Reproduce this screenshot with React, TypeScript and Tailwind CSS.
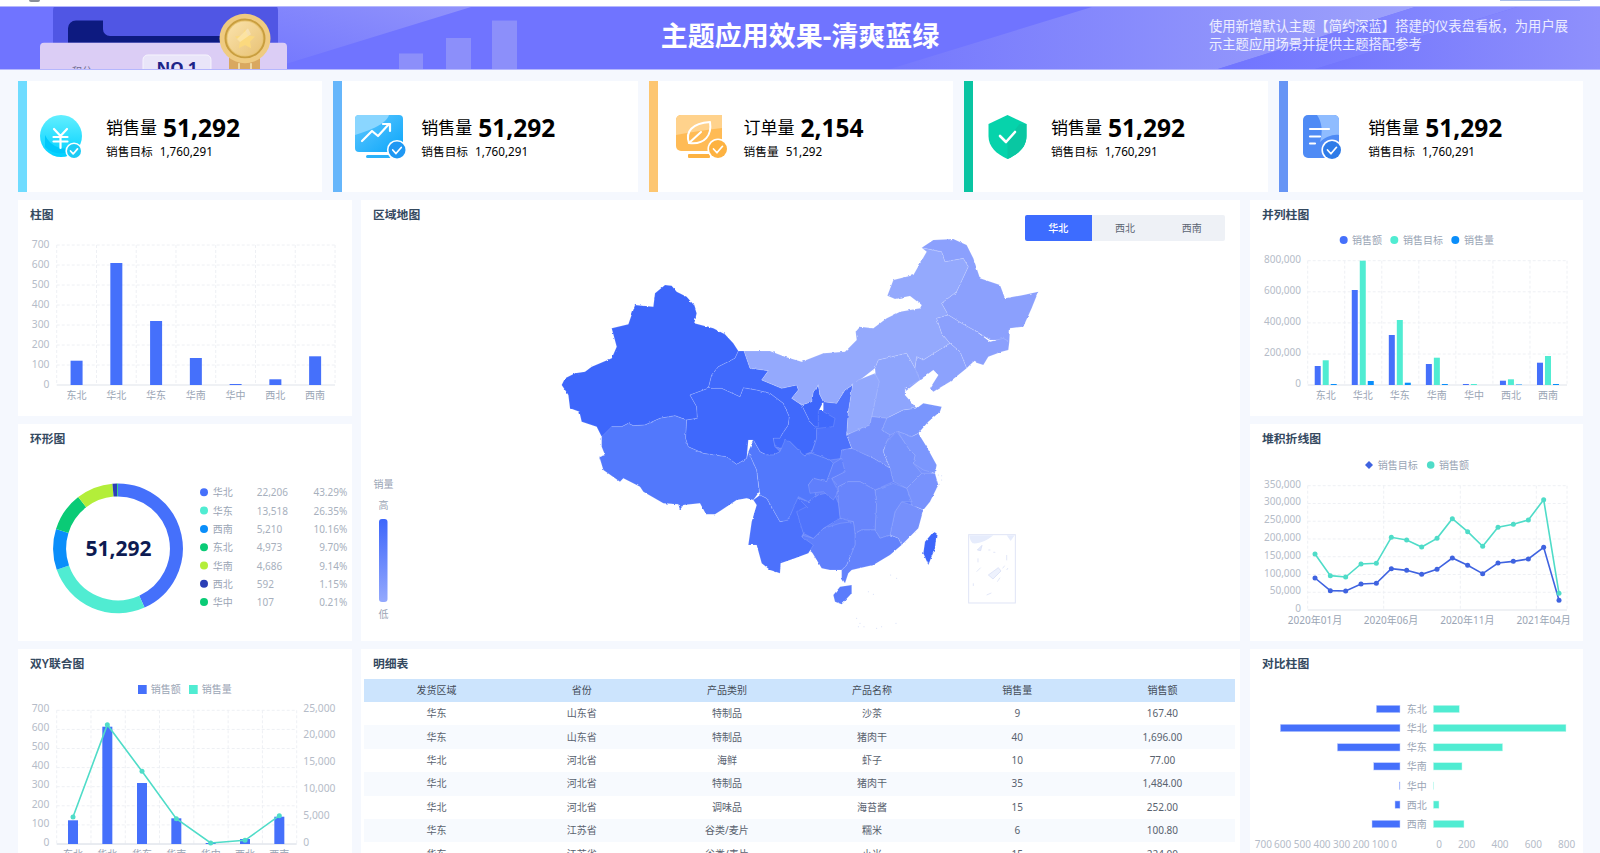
import React from "react";

const CATS = ["东北", "华北", "华东", "华南", "华中", "西北", "西南"];
const BLUE = "#4570fb";
const TEAL = "#50ecd2";
const AZURE = "#0a8efa";
const GRID = "#eef0f4";

type TP = { x: number; y: number; a?: "start" | "middle" | "end"; c?: string; s?: number; w?: number; children: React.ReactNode };
function T({ x, y, a = "middle", c = "#9aa5b5", s = 10, w, children }: TP) {
  return (
    <text x={x} y={y} textAnchor={a} dominantBaseline="central" fontSize={s} fontWeight={w} fill={c}>
      {children}
    </text>
  );
}

function HL({ x1, x2, y, solid }: { x1: number; x2: number; y: number; solid?: boolean }) {
  return <line x1={x1} x2={x2} y1={y} y2={y} stroke={solid ? "#dfe3ea" : GRID} strokeDasharray={solid ? undefined : "3 2"} />;
}
function VL({ x, y1, y2 }: { x: number; y1: number; y2: number }) {
  return <line x1={x} x2={x} y1={y1} y2={y2} stroke={GRID} strokeDasharray="3 2" />;
}

function Panel({ title, titleH = 28, className = "", children }: { title: string; titleH?: number; className?: string; children: React.ReactNode }) {
  return (
    <section className={`relative flex flex-col overflow-hidden bg-white ${className}`}>
      <h2 className="shrink-0 pl-3 pt-[6px] text-[11.8px] leading-4 font-semibold text-[#34495f]" style={{ height: titleH }}>
        {title}
      </h2>
      {children}
    </section>
  );
}

function BarPanel() {
  const vals = [24.3, 122, 64, 27, 1, 5.7, 28.7];
  const x0 = 56.7;
  const cw = (335 - x0) / 7;
  return (
    <svg className="block h-[188px] w-[334px] shrink-0" viewBox="18 228 334 188">
      {[0, 1, 2, 3, 4, 5, 6].map((i) => (
        <HL key={i} x1={x0} x2={335} y={245 + i * 20} />
      ))}
      {[0, 1, 2, 3, 4, 5, 6, 7].map((i) => (
        <VL key={i} x={x0 + i * cw} y1={245} y2={385} />
      ))}
      <HL x1={x0} x2={335} y={385} solid />
      {["700", "600", "500", "400", "300", "200", "100", "0"].map((l, i) => (
        <T key={l} x={49.5} y={243.7 + i * 20} a="end" c="#b5bcc8" s={10.3}>
          {l}
        </T>
      ))}
      {vals.map((v, i) => (
        <rect key={i} x={x0 + cw * i + cw / 2 - 6} y={385 - v} width={12} height={v} fill={BLUE} />
      ))}
      {CATS.map((c, i) => (
        <T key={c} x={x0 + cw * i + cw / 2} y={395}>
          {c}
        </T>
      ))}
    </svg>
  );
}

const DONUT: [string, string, string, number, string][] = [
  ["华北", "22,206", "43.29%", 43.29, BLUE],
  ["华东", "13,518", "26.35%", 26.35, "#50ecd2"],
  ["西南", "5,210", "10.16%", 10.16, AZURE],
  ["东北", "4,973", "9.70%", 9.7, "#0acb76"],
  ["华南", "4,686", "9.14%", 9.14, "#b3ee3a"],
  ["西北", "592", "1.15%", 1.15, "#2b3fb5"],
  ["华中", "107", "0.21%", 0.21, "#0acb76"],
];

function DonutPanel() {
  const cx = 118;
  const cy = 548.3;
  const r = 58.4;
  let acc = 0;
  const arcs = DONUT.map((d) => {
    const a0 = (acc / 100) * Math.PI * 2 - Math.PI / 2;
    acc += d[3];
    const a1 = (acc / 100) * Math.PI * 2 - Math.PI / 2;
    const big = d[3] > 50 ? 1 : 0;
    return {
      c: d[4],
      p: `M${cx + r * Math.cos(a0)} ${cy + r * Math.sin(a0)}A${r} ${r} 0 ${big} 1 ${cx + r * Math.cos(a1)} ${cy + r * Math.sin(a1)}`,
    };
  });
  return (
    <svg className="block h-[189px] w-[334px] shrink-0" viewBox="18 452 334 189">
      {arcs.map((a, i) => (
        <path key={i} d={a.p} fill="none" stroke={a.c} strokeWidth={13} />
      ))}
      <T x={118.5} y={548} c="#0d1b52" s={21} w={700}>
        51,292
      </T>
      {DONUT.map((d, i) => {
        const y = 492.3 + i * 18.3;
        return (
          <g key={d[0]}>
            <circle cx={204} cy={y} r={4} fill={d[4]} />
            <T x={212.7} y={y} a="start">
              {d[0]}
            </T>
            <T x={256.7} y={y} a="start" c="#a7b0bd">
              {d[1]}
            </T>
            <T x={347.3} y={y} a="end" c="#a7b0bd">
              {d[2]}
            </T>
          </g>
        );
      })}
    </svg>
  );
}

function GroupedPanel() {
  const x0 = 1307.7;
  const x1 = 1567;
  const cw = (x1 - x0) / 7;
  const vals = [
    [19, 24.7, 1],
    [95, 124.3, 4],
    [50, 65, 2.3],
    [21, 27.3, 1],
    [1, 1, 0],
    [4.3, 5.7, 0.5],
    [22.3, 29, 1],
  ];
  return (
    <svg className="block h-[188px] w-[333px] shrink-0" viewBox="1250 228 333 188">
      <circle cx={1343.7} cy={240} r={4} fill={BLUE} />
      <T x={1352} y={240} a="start">销售额</T>
      <circle cx={1394.3} cy={240} r={4} fill={TEAL} />
      <T x={1403} y={240} a="start">销售目标</T>
      <circle cx={1455.3} cy={240} r={4} fill={AZURE} />
      <T x={1464} y={240} a="start">销售量</T>
      {[0, 1, 2, 3].map((i) => (
        <HL key={i} x1={x0} x2={x1} y={260.7 + i * 31.1} />
      ))}
      {[0, 1, 2, 3, 4, 5, 6, 7].map((i) => (
        <VL key={i} x={x0 + i * cw} y1={260.7} y2={385} />
      ))}
      <HL x1={x0} x2={x1} y={385} solid />
      {["800,000", "600,000", "400,000", "200,000", "0"].map((l, i) => (
        <T key={l} x={1301} y={258.5 + i * 31.1} a="end" c="#b5bcc8" s={10}>
          {l}
        </T>
      ))}
      {vals.map((g, i) => {
        const cx = x0 + cw * i + cw / 2 - 0.5;
        return (
          <g key={i}>
            <rect x={cx - 11} y={385 - g[0]} width={6} height={g[0]} fill={BLUE} />
            <rect x={cx - 3} y={385 - g[1]} width={6} height={g[1]} fill={TEAL} />
            <rect x={cx + 5} y={385 - g[2]} width={6} height={g[2]} fill={AZURE} />
          </g>
        );
      })}
      {CATS.map((c, i) => (
        <T key={c} x={x0 + cw * i + cw / 2 - 0.5} y={395}>
          {c}
        </T>
      ))}
    </svg>
  );
}

const L_T = [1149, 1187, 1188, 1167, 1165, 1121, 1126, 1138, 1123, 1089, 1111, 1136, 1104, 1099, 1092, 1057, 1216];
const L_S = [1077, 1142, 1146, 1107, 1105, 1027, 1035, 1056, 1030, 971, 1010, 1054, 997, 988, 975, 914, 1195];
const L_X = [225, 271, 317, 363, 409, 454, 500, 545, 591, 637, 683, 728, 774, 820, 865, 911, 957];

function LinePanel() {
  const x0 = 1307.7;
  const x1 = 1567;
  const px = (z: number) => 1240 + z / 3;
  const py = (z: number) => 195 + z / 3;
  const line = (ys: number[], color: string) => (
    <g>
      <polyline points={ys.map((y, i) => `${px(L_X[i])},${py(y)}`).join(" ")} fill="none" stroke={color} strokeWidth={1.6} />
      {ys.map((y, i) => (
        <circle key={i} cx={px(L_X[i])} cy={py(y)} r={2.5} fill={color} />
      ))}
    </g>
  );
  return (
    <svg className="block h-[189px] w-[333px] shrink-0" viewBox="1250 452 333 189">
      <path d="M1369 461l4 4-4 4-4-4z" fill="#3f63e0" />
      <T x={1377.7} y={465} a="start">销售目标</T>
      <circle cx={1430.7} cy={465} r={3.8} fill="#4fdcc8" />
      <T x={1439} y={465} a="start">销售额</T>
      {[0, 1, 2, 3, 4, 5, 6].map((i) => (
        <HL key={i} x1={x0} x2={x1} y={485.7 + i * 17.76} />
      ))}
      {[x0, 1383.7, 1460.3, 1536.3, x1].map((x) => (
        <VL key={x} x={x} y1={485.7} y2={610} />
      ))}
      <HL x1={x0} x2={x1} y={610} solid />
      {["350,000", "300,000", "250,000", "200,000", "150,000", "100,000", "50,000", "0"].map((l, i) => (
        <T key={l} x={1301} y={483.5 + i * 17.8} a="end" c="#b5bcc8" s={10}>
          {l}
        </T>
      ))}
      {line(L_T, "#3f63e0")}
      {line(L_S, "#4fdcc8")}
      {["2020年01月", "2020年06月", "2020年11月", "2021年04月"].map((l, i) => (
        <T key={l} x={px([225, 453, 682, 911][i])} y={620}>
          {l}
        </T>
      ))}
    </svg>
  );
}

function ComboPanel() {
  const x0 = 56.7;
  const x1 = 296.7;
  const cw = (x1 - x0) / 7;
  const h = [23.7, 117.3, 61, 25.7, 1, 5, 27.3];
  const pts = [531, 254, 394, 536, 609, 601, 527];
  const cxs = [219, 322, 426, 529, 632, 735, 838].map((z) => z / 3);
  const py = (z: number) => 640 + z / 3;
  return (
    <svg className="block h-[176px] w-[334px] shrink-0" viewBox="18 677 334 176">
      <rect x={138} y={685} width={8.7} height={9} fill={BLUE} />
      <T x={150.7} y={689.3} a="start">销售额</T>
      <rect x={189} y={685} width={8.7} height={9} fill={TEAL} />
      <T x={201.7} y={689.3} a="start">销售量</T>
      {[0, 1, 2, 3, 4, 5, 6].map((i) => (
        <HL key={i} x1={x0} x2={x1} y={710.3 + i * 19.1} />
      ))}
      {[0, 1, 2, 3, 4, 5, 6, 7].map((i) => (
        <VL key={i} x={x0 + i * cw} y1={710.3} y2={844} />
      ))}
      <line x1={x0} x2={x1} y1={844} y2={844} stroke="#d2d8e2" />
      {["700", "600", "500", "400", "300", "200", "100", "0"].map((l, i) => (
        <T key={l} x={49.3} y={707.8 + i * 19.15} a="end" c="#b5bcc8" s={10.3}>
          {l}
        </T>
      ))}
      {["25,000", "20,000", "15,000", "10,000", "5,000", "0"].map((l, i) => (
        <T key={l} x={303.3} y={707.5 + i * 26.9} a="start" c="#b5bcc8" s={10.3}>
          {l}
        </T>
      ))}
      {h.map((v, i) => (
        <rect key={i} x={cxs[i] - 5} y={844 - v} width={10} height={v} fill={BLUE} />
      ))}
      <polyline points={pts.map((p, i) => `${cxs[i]},${py(p)}`).join(" ")} fill="none" stroke="#4fdcc8" strokeWidth={1.6} />
      {pts.map((p, i) => (
        <circle key={i} cx={cxs[i]} cy={py(p)} r={2.5} fill="#4fdcc8" />
      ))}
      {CATS.map((c, i) => (
        <T key={c} x={cxs[i]} y={854}>
          {c}
        </T>
      ))}
    </svg>
  );
}

function ButterflyPanel() {
  const ys = [207, 264, 322, 379, 437, 494, 552].map((z) => 640 + z / 3);
  const lefts = [409, 121, 292, 401, 478, 465, 396].map((z) => 1240 + z / 3);
  const rights = [658, 978, 788, 666, 581, 597, 672].map((z) => 1240 + z / 3);
  return (
    <svg className="block h-[176px] w-[333px] shrink-0" viewBox="1250 677 333 176">
      {ys.map((y, i) => (
        <g key={i}>
          <rect x={lefts[i]} y={y - 3.7} width={1400 - lefts[i]} height={7.4} fill={BLUE} stroke="#c7d4fe" strokeWidth={0.5} />
          <rect x={1433.3} y={y - 3.7} width={rights[i] - 1433.3} height={7.4} fill={TEAL} stroke="#d0faf2" strokeWidth={0.5} />
          <T x={1416.7} y={y}>
            {CATS[i]}
          </T>
        </g>
      ))}
      {[["700", 70], ["600", 128], ["500", 187], ["400", 246], ["300", 305], ["200", 363], ["100", 421], ["0", 462]].map(([l, z]) => (
        <T key={String(l)} x={1240 + Number(z) / 3} y={844.3} c="#b5bcc8" s={10}>
          {l}
        </T>
      ))}
      {[["0", 597], ["200", 680], ["400", 780], ["600", 880], ["800", 980]].map(([l, z]) => (
        <T key={String(l)} x={1240 + Number(z) / 3} y={844.3} c="#b5bcc8" s={10}>
          {l}
        </T>
      ))}
    </svg>
  );
}

const FILL: [string, string][] = [
  ["#6382fc", "700,640 830,600 900,660 1000,700 1100,760 1130,850 1000,980 850,1010 740,920 680,760"],
  ["#4069fc", "825,555 890,555 890,615 825,615"],
  ["#7892fd", "1085,640 1150,700 1178,745 1140,810 1090,790 1060,700"],
  ["#8ea5fd", "955,470 1020,440 1050,590 990,620 930,630"],
  ["#7690fc", "1020,590 1090,570 1120,640 1040,670 990,640"],
];

const REGIONS: [string, string][] = [
  ["#3d66fb", "375,180 395,182 410,200 440,215 462,240 470,265 463,295 520,310 555,328 580,355 595,378 585,400 535,425 515,450 505,490 450,510 470,545 472,580 440,585 405,572 360,580 315,600 280,602 265,595 245,605 215,605 208,635 185,635 170,605 125,590 118,560 90,550 85,510 65,480 75,460 105,445 135,440 155,425 215,400 230,365 215,310 265,298 285,240 340,245 345,205"],
  ["#5278fc", "185,635 215,605 245,605 265,595 280,602 315,600 360,580 405,572 440,585 437,640 445,665 490,685 560,695 590,718 620,700 625,680 650,735 658,800 640,825 620,820 590,825 545,855 525,868 498,868 480,835 430,840 420,855 415,838 370,835 310,800 300,785 250,760 240,770 190,735 178,695 195,690 185,665"],
  ["#3f68fc", "450,510 505,490 545,490 600,515 610,488 650,495 690,505 730,535 748,575 745,600 725,630 720,640 700,640 705,665 720,680 700,690 680,690 660,680 640,645 625,645 620,700 590,718 560,695 490,685 445,665 437,640 440,585 472,580 470,545"],
  ["#4069fc", "595,378 612,378 630,430 685,437 665,465 725,490 770,480 775,495 755,520 785,540 810,590 830,610 830,640 815,680 790,690 750,650 725,670 705,665 700,640 720,640 725,630 745,600 748,575 730,535 690,505 650,495 610,488 600,515 545,490 505,490 515,450 535,425 585,400"],
  ["#3d66fb", "785,540 815,530 820,500 835,482 840,510 850,530 835,560 835,605 825,605 810,590"],
  ["#4c71fc", "850,530 890,535 915,495 938,480 925,560 920,630 935,670 905,675 905,700 870,705 815,685 830,640 830,610 880,605 885,580 850,560"],
  ["#94a9fd", "612,378 690,378 735,395 785,410 850,385 915,380 950,345 947,320 960,305 1000,310 1040,280 1080,260 1140,250 1145,240 1110,213 1065,222 1042,212 1060,165 1120,150 1160,80 1145,68 1180,75 1205,80 1215,110 1270,100 1285,125 1250,200 1205,235 1225,270 1190,280 1205,325 1230,355 1150,405 1130,395 1125,430 1100,385 1015,405 1005,430 960,465 938,480 915,495 890,535 850,530 840,510 835,482 820,500 815,530 785,540 755,520 775,495 770,480 725,490 665,465 685,437 630,430"],
  ["#8ba0fd", "1145,68 1180,45 1240,42 1280,60 1300,100 1320,160 1380,180 1395,220 1450,210 1495,200 1475,250 1450,305 1410,310 1408,350 1390,345 1350,345 1310,320 1265,295 1225,270 1205,235 1250,200 1285,125 1270,100 1215,110 1205,80 1180,75"],
  ["#8ba0fd", "1190,280 1225,270 1265,295 1310,320 1350,350 1390,340 1408,350 1405,375 1385,380 1345,395 1330,420 1300,410 1280,430 1260,380 1230,355 1205,325"],
  ["#8ca2fd", "1125,430 1130,395 1150,405 1230,355 1260,380 1280,430 1230,470 1180,500 1170,490 1195,450 1180,435 1140,465 1095,500"],
  ["#8ea5fd", "1015,405 1100,385 1125,430 1140,465 1095,490 1095,510 1130,550 1090,555 1040,580 995,575 1010,500 1005,430"],
  ["#92a8fd", "955,465 1005,445 1018,470 995,575 990,600 920,630 925,560 938,480"],
  ["#7a96fd", "1040,580 1090,555 1130,550 1150,535 1205,545 1200,560 1165,590 1135,625 1115,635 1075,620 1050,630 1025,615"],
  ["#7690fc", "920,630 990,600 995,575 1040,580 1025,615 1050,630 1040,650 1030,680 1050,730 1000,700 940,675 935,670"],
  ["#7b96fd", "1075,620 1115,635 1135,625 1160,665 1190,720 1185,745 1150,735 1120,715 1125,690 1105,670 1085,640"],
  ["#7591fc", "1040,650 1070,620 1085,640 1105,670 1125,690 1120,715 1145,745 1100,790 1060,770 1050,730 1030,680"],
  ["#7892fd", "1145,745 1185,745 1195,780 1170,830 1150,855 1115,840 1100,790"],
  ["#7690fc", "1085,830 1115,840 1150,855 1135,910 1085,960 1075,940 1050,930 1065,860"],
  ["#6d8bfc", "1005,795 1060,775 1100,790 1115,830 1085,830 1065,860 1050,930 1020,940 1005,915 1010,830"],
  ["#6885fc", "905,675 935,670 1000,700 1050,730 1060,770 1005,795 960,770 925,770 895,785 875,760 915,740 900,705"],
  ["#6885fc", "895,785 925,770 960,770 1005,795 1010,830 1005,915 965,915 945,925 940,890 900,880 895,835"],
  ["#6382fc", "965,915 1005,915 1020,940 1050,930 1075,940 1085,960 1050,990 1000,1020 935,1035 925,1045 915,1075 905,1060 905,1035 920,1020 945,960 945,925"],
  ["#5f7ffc", "785,930 820,940 850,910 900,895 940,890 945,925 945,960 920,1020 905,1035 870,1035 845,1030 815,980 790,950"],
  ["#5074fc", "805,830 835,810 880,800 895,835 900,880 850,910 820,940 790,925 765,870 775,820"],
  ["#4c71fc", "640,825 660,810 680,820 720,890 745,885 770,815 780,825 800,845 770,860 790,925 785,935 820,960 805,985 765,1000 722,1015 720,1045 690,1035 665,1015 650,960 625,960 635,890 650,840"],
  ["#5278fc", "625,680 640,645 660,680 680,690 700,690 720,680 735,645 750,650 790,690 815,685 870,705 880,715 860,770 820,760 805,780 830,810 805,830 775,815 745,885 720,890 680,820 660,810 650,735"],
  ["#5f7ffc", "880,715 905,700 915,740 875,760 895,800 880,825 850,800 810,805 805,780 820,760 860,770"],
  ["#5a7cfc", "880,1110 900,1085 935,1080 935,1105 905,1138 885,1130"],
  ["#3d66fb", "1180,920 1190,925 1185,970 1165,1020 1150,985 1155,950"],
];

const ISLES = [
  [950, 1180], [960, 1195], [972, 1205], [955, 1205], [1010, 1210], [1025, 1205], [1068, 1195], [1052, 1050], [1070, 1060], [985, 1100], [1000, 1108],
  [1195, 750], [1205, 765], [1198, 778], [1190, 790], [1205, 752],
];

function MapPanel() {
  return (
    <svg className="block h-[413px] w-[877px] shrink-0" viewBox="361 228 877 413">
      <defs>
        <linearGradient id="mapscale" x1="0" y1="0" x2="0" y2="1">
          <stop offset="0" stopColor="#3d66fb" />
          <stop offset="1" stopColor="#94a9fd" />
        </linearGradient>
        <filter id="rough" x="-5%" y="-5%" width="110%" height="110%" colorInterpolationFilters="sRGB">
          <feTurbulence type="fractalNoise" baseFrequency="0.07" numOctaves="2" seed="4" />
          <feDisplacementMap in="SourceGraphic" scale="7" xChannelSelector="R" yChannelSelector="G" />
        </filter>
      </defs>
      <T x={383.6} y={484}>销量</T>
      <T x={383.4} y={505}>高</T>
      <rect x={379} y={519} width={8.5} height={83} rx={3} fill="url(#mapscale)" />
      <T x={383.4} y={614}>低</T>
      <g transform="translate(540 225) scale(0.33333)">
        <g filter="url(#rough)">
          {FILL.map(([f, p], i) => (
            <polygon key={i} points={p} fill={f} />
          ))}
          {REGIONS.map(([f, p], i) => (
            <polygon key={i} points={p} fill={f} stroke="#ffffff" strokeOpacity={0.28} strokeWidth={1.5} strokeLinejoin="round" />
          ))}
        </g>
        {ISLES.map(([x, y], i) => (
          <circle key={i} cx={x} cy={y} r={1.6} fill="#cfd8f6" />
        ))}
        <rect x={1286} y={929} width={140} height={205} fill="#ffffff" stroke="#dfe4f6" strokeWidth={3} />
        <path d="M1288 931H1360C1345 945 1315 958 1298 955 1292 950 1289 942 1288 931Z" fill="#e6ecfc" />
        <path d="M1400 931H1424L1412 948Z" fill="#e6ecfc" />
        <path d="M1312 975l14-14-4 16zM1400 990v16M1314 1000v12M1310 1040l12-12M1372 1070l8-12M1340 1110l14-6M1300 1075v8" stroke="#d3dbf5" strokeWidth={2} fill="#e6ecfc" />
        <path d="M1345 1050l30-22 8 10-24 24zM1388 1030l6-8M1400 1035l4-6M1345 975h6M1360 982h6" stroke="#d3dbf5" strokeWidth={2} fill="#eef2fd" />
      </g>
    </svg>
  );
}

const ROWS = [
  ["华东", "山东省", "特制品", "沙茶", "9", "167.40"],
  ["华东", "山东省", "特制品", "猪肉干", "40", "1,696.00"],
  ["华北", "河北省", "海鲜", "虾子", "10", "77.00"],
  ["华北", "河北省", "特制品", "猪肉干", "35", "1,484.00"],
  ["华北", "河北省", "调味品", "海苔酱", "15", "252.00"],
  ["华东", "江苏省", "谷类/麦片", "糯米", "6", "100.80"],
  ["华东", "江苏省", "谷类/麦片", "小米", "15", "224.00"],
];

function DetailTable() {
  return (
    <div className="shrink-0 pr-[5px] pl-[3px]">
      <div className="grid h-[23px] grid-cols-6 items-center bg-[#cce4fd] text-center text-[10px] text-[#444c58]">
        {["发货区域", "省份", "产品类别", "产品名称", "销售量", "销售额"].map((h) => (
          <span key={h}>{h}</span>
        ))}
      </div>
      {ROWS.map((r, i) => (
        <div key={i} className={`grid h-[23.4px] grid-cols-6 items-center text-center text-[10px] text-[#59626f] ${i % 2 === 1 ? "bg-[#f7fafe]" : "bg-white"}`}>
          {r.map((c, j) => (
            <span key={j}>{c}</span>
          ))}
        </div>
      ))}
    </div>
  );
}

function Badge({ cx, cy, r, c }: { cx: number; cy: number; r: number; c: string }) {
  return (
    <g>
      <circle cx={cx} cy={cy} r={r + 1.6} fill="#ffffff" />
      <circle cx={cx} cy={cy} r={r} fill={c} />
      <path d={`M${cx - r * 0.5} ${cy}l${r * 0.38} ${r * 0.42} ${r * 0.62} -${r * 0.72}`} fill="none" stroke="#fff" strokeWidth={1.7} strokeLinecap="round" strokeLinejoin="round" />
    </g>
  );
}

function IconYen() {
  return (
    <svg className="h-[44px] w-[46px] shrink-0" viewBox="38 115 46 44">
      <defs>
        <linearGradient id="y1" x1="0" y1="0" x2="0" y2="1">
          <stop offset="0" stopColor="#62efff" />
          <stop offset="1" stopColor="#00d0ff" />
        </linearGradient>
      </defs>
      <circle cx={60} cy={136} r={21} fill="url(#y1)" />
      <path d="M44 147a21 21 0 0 0 32 -2 22 22 0 0 1 -32 -10z" fill="#00c8fb" />
      <path d="M53 129l6.500 7 6.500 -7M52.500 137h14M52.500 141.500h14M59.500 136v12" fill="none" stroke="#fff" strokeWidth={2.2} strokeLinecap="round" strokeLinejoin="round" />
      <Badge cx={73} cy={151} r={7} c="#1ccbf5" />
    </svg>
  );
}

function IconChart() {
  return (
    <svg className="h-[44px] w-[53px] shrink-0" viewBox="355 115 53 44">
      <defs>
        <linearGradient id="c1" x1="0" y1="0" x2="1" y2="1">
          <stop offset="0" stopColor="#63c8ff" />
          <stop offset="1" stopColor="#0aa6fa" />
        </linearGradient>
      </defs>
      <rect x={355} y={115} width={48} height={37} rx={4} fill="url(#c1)" />
      <path d="M355 135V119a4 4 0 0 1 4 -4h30c-3 9 -18 15 -34 20z" fill="#8ad6ff" />
      <rect x={366} y={155} width={26} height={3} rx={1.500} fill="#2bb2fa" />
      <path d="M362 141l10-10 6 5 11-12M383 124h7v7" fill="none" stroke="#fff" strokeWidth={2.2} strokeLinecap="round" strokeLinejoin="round" />
      <Badge cx={397} cy={150} r={8.500} c="#1f98f3" />
    </svg>
  );
}

function IconLeaf() {
  return (
    <svg className="h-[44px] w-[54px] shrink-0" viewBox="675 115 54 44">
      <rect x={675} y={115} width={46} height={36} rx={5} fill="#ffbb55" />
      <path d="M675 135v-15a5 5 0 0 1 5 -5h41v13c-16 2 -32 4 -46 7z" fill="#ffd28c" />
      <rect x={687} y={154} width={22} height={4} rx={1} fill="#fdb241" />
      <path d="M688 143c-4 -11 3 -20 21 -21 2 13 -5 23 -21 21z" fill="none" stroke="#fff" strokeWidth={2} strokeLinejoin="round" />
      <path d="M688 143l12 -11" fill="none" stroke="#fff" strokeWidth={2} strokeLinecap="round" />
      <Badge cx={717} cy={149} r={9} c="#fdb241" />
    </svg>
  );
}

function IconShield() {
  return (
    <svg className="h-[44px] w-[40px] shrink-0" viewBox="987 115 40 44">
      <path d="M1006.500 115l19 9v12c0 11 -8 18 -19 23 -11 -5 -19 -12 -19 -23v-12z" fill="#06d3ab" />
      <path d="M1006.500 159v-20l12 -15 7 0v12c0 11 -8 18 -19 23z" fill="#09c7a2" />
      <path d="M999 136l6 6 9-10" fill="none" stroke="#fff" strokeWidth={2.6} strokeLinecap="round" strokeLinejoin="round" />
    </svg>
  );
}

function IconDoc() {
  return (
    <svg className="h-[44px] w-[42px] shrink-0" viewBox="1304 115 42 44">
      <rect x={1304} y={115} width={36} height={43} rx={5} fill="#4f8bf5" />
      <path d="M1318 115h17a5 5 0 0 1 5 5v15c-6 -1 -14 2 -19 7 3 -10 2 -20 -3 -27z" fill="#8fbcff" />
      <path d="M1311 129h19M1311 136.500h10M1311 143.500h5" stroke="#fff" strokeWidth={2.200} strokeLinecap="round" />
      <Badge cx={1333} cy={150} r={9} c="#2f7ce8" />
    </svg>
  );
}

type K = { bar: string; icon: React.ReactNode; pad: string; gap: string; a: string; b: string; c: string; d: string };
const KPIS: K[] = [
  { bar: "bg-[#6fdcff]", icon: <IconYen />, pad: "pl-[12px]", gap: "gap-[21px]", a: "销售量", b: "51,292", c: "销售目标", d: "1,760,291" },
  { bar: "bg-[#66b6fb]", icon: <IconChart />, pad: "pl-[13px]", gap: "gap-[13px]", a: "销售量", b: "51,292", c: "销售目标", d: "1,760,291" },
  { bar: "bg-[#fdc671]", icon: <IconLeaf />, pad: "pl-[18px]", gap: "gap-[14px]", a: "订单量", b: "2,154", c: "销售量", d: "51,292" },
  { bar: "bg-[#09c4a2]", icon: <IconShield />, pad: "pl-[15px]", gap: "gap-[23px]", a: "销售量", b: "51,292", c: "销售目标", d: "1,760,291" },
  { bar: "bg-[#6795f5]", icon: <IconDoc />, pad: "pl-[15px]", gap: "gap-[23px]", a: "销售量", b: "51,292", c: "销售目标", d: "1,760,291" },
];

function Kpi({ k }: { k: K }) {
  return (
    <div className={`flex items-center bg-white ${k.bar}`}>
      <div className={`h-full w-[9px] shrink-0 ${k.bar}`} />
      <div className={`flex h-full flex-1 items-center bg-white ${k.pad} ${k.gap}`}>
        {k.icon}
        <div className="text-black">
          <div className="flex items-center gap-[6px] leading-[30px]">
            <span className="text-[17px]">{k.a}</span>
            <span className="text-[24.500px] font-bold">{k.b}</span>
          </div>
          <div className="-mt-[1px] flex items-center gap-[7px] text-[11.7px] leading-[18px]">
            <span>{k.c}</span>
            <span>{k.d}</span>
          </div>
        </div>
      </div>
    </div>
  );
}

function HeaderArt() {
  return (
    <svg className="absolute inset-0 h-full w-full" viewBox="0 6 1600 64" preserveAspectRatio="none">
      <defs>
        <linearGradient id="h1" x1="0" y1="0" x2="1" y2="0">
          <stop offset="0" stopColor="#7578fd" />
          <stop offset="1" stopColor="#9ea2fb" />
        </linearGradient>
        <linearGradient id="h2" x1="0" y1="0" x2="1" y2="0">
          <stop offset="0" stopColor="#7074ff" />
          <stop offset="1" stopColor="#8a8dfd" />
        </linearGradient>
        <linearGradient id="h3" x1="0" y1="0" x2="1" y2="0">
          <stop offset="0" stopColor="#7275fd" />
          <stop offset="1" stopColor="#8f90fc" />
        </linearGradient>
        <linearGradient id="h4" x1="0" y1="1" x2="1" y2="0">
          <stop offset="0" stopColor="#7377fe" />
          <stop offset="1" stopColor="#9193fb" />
        </linearGradient>
        <linearGradient id="med" x1="0" y1="0" x2="1" y2="1">
          <stop offset="0" stopColor="#fbe3ab" />
          <stop offset="1" stopColor="#e8c276" />
        </linearGradient>
      </defs>
      <polygon points="270,6 471,6 288,64 270,70" fill="url(#h4)" />
      <polygon points="1092,6 1415,6 1218,70 890,70" fill="url(#h1)" />
      <polygon points="1415,6 1517,6 1315,70 1218,70" fill="url(#h2)" />
      <polygon points="1517,6 1600,6 1600,70 1315,70" fill="url(#h3)" />
      <rect x={399} y={54} width={24} height={16} fill="#8c8ffa" />
      <rect x={446} y={38} width={25} height={32} fill="#8c8ffa" />
      <rect x={492} y={20} width={25} height={50} fill="#8c8ffa" />
      <rect x={53} y={0} width={225} height={80} rx={10} fill="#5056e4" />
      <path d="M68 43V28a8 8 0 0 1 8 -8h27v9a7 7 0 0 0 7 7h120v7z" fill="#0d1a80" />
      <rect x={40} y={43} width={247} height={40} rx={4} fill="#dbcdf5" />
      <rect x={143} y={55.500} width={68} height={30} rx={5} fill="#e9e5f9" stroke="#f6f4fd" />
      <text x={177} y={75} textAnchor="middle" fontSize={17} fontWeight={700} fill="#1d2488">NO.1</text>
      <text x={72} y={76} fontSize={10} fill="#6d6a8e">积分</text>
      <rect x={229} y={58} width={31} height={14} fill="#d9a860" />
      <rect x={238} y={64} width={2} height={8} fill="#f0d9a4" />
      <rect x={250} y={64} width={2} height={8} fill="#f0d9a4" />
      <circle cx={245} cy={38.500} r={25.500} fill="#efcb81" />
      <circle cx={245} cy={38.500} r={19.500} fill="#e9c674" stroke="#c99e3f" strokeWidth={2} />
      <circle cx={245} cy={38.500} r={17.500} fill="url(#med)" />
      <path d="M245 29l3 6.500 7 1 -5 5 1.200 7 -6.200 -3.300 -6.200 3.300 1.200 -7 -5 -5 7 -1z" fill="#fbd97e" />
      <path d="M237 39l11 -11 3 6 -11 8z" fill="#fff" opacity={0.28} />
    </svg>
  );
}

export default function App() {
  return (
    <div className="h-[853px] w-full overflow-hidden bg-[#f5f8fe] font-['Noto_Sans','Noto_Sans_CJK_SC',sans-serif]">
      <div className="relative h-[6px] bg-white">
        <div className="absolute top-0 left-[29px] h-[1.500px] w-[11px] rounded-b-full bg-[#8a8f99]" />
        <div className="absolute top-0 left-[1500px] h-[1px] w-[80px] bg-[#a8bde8]" />
      </div>
      <header className="relative grid h-[64px] grid-cols-[1fr_auto_1fr] items-center overflow-hidden border-y border-[#b5b7fd] bg-[#7074ff]">
        <HeaderArt />
        <div />
        <h1 className="relative mb-[4px] text-[27px] leading-8 font-bold text-white">主题应用效果-清爽蓝绿</h1>
        <p className="relative mr-[27px] mb-[5px] w-[364px] justify-self-end text-[13.300px] leading-[17.500px] text-white/85">
          使用新增默认主题【简约深蓝】搭建的仪表盘看板，为用户展示主题应用场景并提供主题搭配参考
        </p>
      </header>
      <div className="mt-[11px] grid h-[111px] grid-cols-5 gap-x-[11px] pr-[16.500px] pl-[18px]">
        {KPIS.map((k, i) => (
          <Kpi key={i} k={k} />
        ))}
      </div>
      <main className="mt-2 grid grid-cols-[334px_879px_334px] grid-rows-[216px_217px_212px] gap-x-[9px] gap-y-2 pl-[18px]">
        <Panel title="柱图">
          <BarPanel />
        </Panel>
        <Panel title="区域地图" className="row-span-2">
          <div className="absolute top-[15px] right-[15px] flex h-[26px] w-[200px] overflow-hidden rounded-[2px] text-center text-[10px] leading-[26px]">
            <span className="flex-1 bg-[#3d6cff] font-medium text-white">华北</span>
            <span className="flex-1 bg-[#eef1f6] text-[#5b6472]">西北</span>
            <span className="flex-1 bg-[#eef1f6] text-[#5b6472]">西南</span>
          </div>
          <MapPanel />
        </Panel>
        <Panel title="并列柱图" className="ml-[1px]">
          <GroupedPanel />
        </Panel>
        <Panel title="环形图">
          <DonutPanel />
        </Panel>
        <Panel title="堆积折线图" className="ml-[1px]">
          <LinePanel />
        </Panel>
        <Panel title="双Y联合图">
          <ComboPanel />
        </Panel>
        <Panel title="明细表" titleH={30}>
          <DetailTable />
        </Panel>
        <Panel title="对比柱图" className="ml-[1px]">
          <ButterflyPanel />
        </Panel>
      </main>
    </div>
  );
}
